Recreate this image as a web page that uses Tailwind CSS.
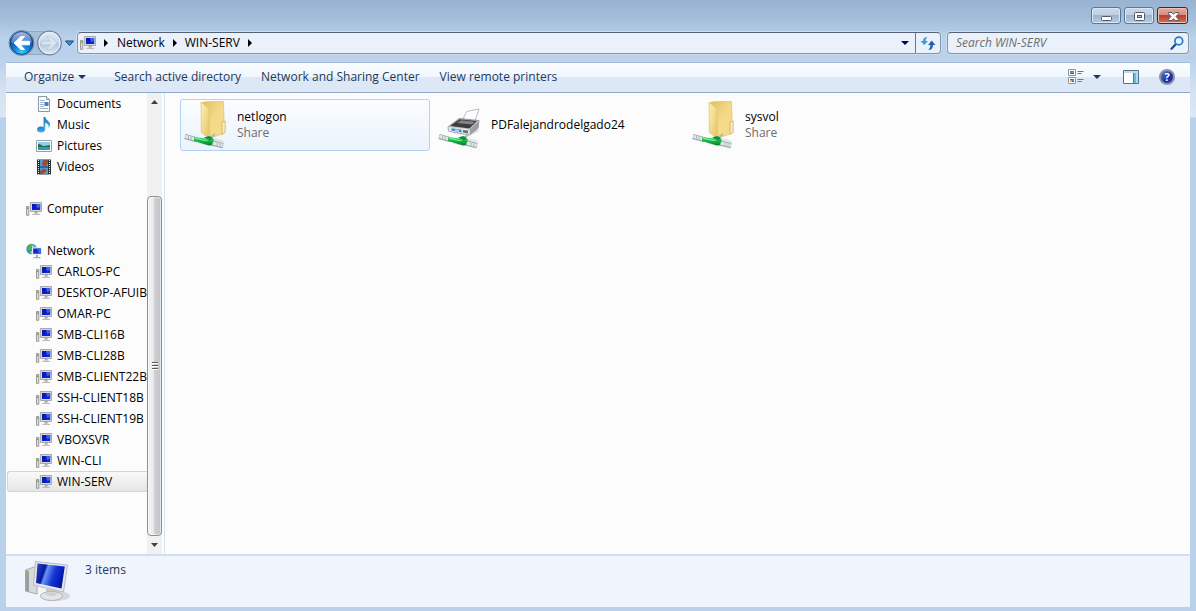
<!DOCTYPE html>
<html lang="en">
<head>
<meta charset="utf-8">
<title>WIN-SERV</title>
<meta name="viewport" content="width=device-width, initial-scale=1">
<script src="https://cdn.jsdelivr.net/npm/@tailwindcss/browser@4"></script>
</head>
<body class="h-screen overflow-hidden bg-[#b9d1ea] font-['Open_Sans','Noto_Sans',sans-serif] text-xs text-black">
<svg class="absolute size-0" aria-hidden="true">
  <defs>
    <linearGradient id="screen" x1="0" y1="0" x2="1" y2="1"><stop offset="0" stop-color="#0a14a8"/><stop offset=".5" stop-color="#0a1cc4"/><stop offset="1" stop-color="#1030d0"/></linearGradient>
    <linearGradient id="bigscreen" x1="0" y1="0" x2="1" y2=".3"><stop offset="0" stop-color="#2c50c8"/><stop offset=".34" stop-color="#0618a0"/><stop offset=".42" stop-color="#6a94f4"/><stop offset=".7" stop-color="#1434d4"/><stop offset="1" stop-color="#0418a8"/></linearGradient>
    <linearGradient id="folderL" x1="0" y1="0" x2="1" y2="1"><stop offset="0" stop-color="#fdf1b8"/><stop offset="1" stop-color="#e6c35c"/></linearGradient>
    <linearGradient id="folderR" x1="0" y1="0" x2="1" y2="1"><stop offset="0" stop-color="#e3bf5c"/><stop offset=".5" stop-color="#f3d98a"/><stop offset="1" stop-color="#f7dc84"/></linearGradient>
    <linearGradient id="green" x1="0" y1="0" x2="0" y2="1"><stop offset="0" stop-color="#3fd86c"/><stop offset=".5" stop-color="#16b046"/><stop offset="1" stop-color="#067a28"/></linearGradient>
    <radialGradient id="orb" cx=".5" cy=".95" r=".8"><stop offset="0" stop-color="#38d8ff"/><stop offset=".4" stop-color="#1488e0"/><stop offset="1" stop-color="#0a3f9c"/></radialGradient>
    <linearGradient id="orbshine" x1="0" y1="0" x2="0" y2="1"><stop offset="0" stop-color="#d4e4f8"/><stop offset="1" stop-color="#4f84cc"/></linearGradient>
    <linearGradient id="glass" x1="0" y1="0" x2="0" y2="1"><stop offset="0" stop-color="#e2ebf5"/><stop offset=".5" stop-color="#c8d6e6"/><stop offset=".52" stop-color="#b4c8de"/><stop offset="1" stop-color="#dbe8f5"/></linearGradient>
    <linearGradient id="note" x1="0" y1="0" x2="0" y2="1"><stop offset="0" stop-color="#2578c4"/><stop offset="1" stop-color="#48b4ee"/></linearGradient>
    <symbol id="pc" viewBox="0 0 16 16">
      <path d="M.5 5.5h2.3v8.8H.5z" fill="#dcdcdc" stroke="#9a9a9a"/><path d="M1 6.5h1.500v1.500H1z" fill="#48b83c"/>
      <path d="M4.400 1.500h11.100v9H4.400z" fill="#d6d6d6" stroke="#a8a8a8"/><path d="M6 3h8.200v6H6z" fill="url(#screen)"/><path d="M10 3h4.200v3L11 7z" fill="#3a62e8"/>
      <path d="M8.600 11h3v1.600h-3z" fill="#a6a6a6"/><path d="M6.600 12.700h7l.8 1.400H6z" fill="#bdbdbd"/>
    </symbol>
    <symbol id="net" viewBox="0 0 16 16">
      <circle cx="5.600" cy="6" r="5.300" fill="#2489cc"/><path d="M1 4.500 4 1.200 7.200 1 5 4 5.600 6.200 3.200 7.500 1 7z" fill="#58b348"/><path d="M7.500 1.200 10 2.800 8.800 3.800z" fill="#6bd0ea"/><path d="M3 9l3-1v3z" fill="#8cd858"/><path d="M5.500 2.200 8 3 6.300 4.800z" fill="#c9f0fa"/>
      <path d="M6.400 4.800h9.100v6.700H6.400z" fill="#c8d4de" stroke="#e8f0f4"/><path d="M7.200 5.500h7.600v5.200H7.200z" fill="#1228c8"/><path d="M11 5.500h3.800v5.200h-2z" fill="#3c68e8"/><path d="M10 12h2v2h2.500v1.300h-7V14H10z" fill="#9eb0c0"/>
    </symbol>
    <symbol id="cable" viewBox="0 0 48 48">
      <ellipse cx="30" cy="41" rx="13" ry="3.400" fill="#c9cfd0" opacity=".5"/>
      <path d="M27 37l4-1.500 3-2.500" fill="none" stroke="#b3b9bb" stroke-width="2"/>
      <path d="M4 35.500 16 38.900" stroke="#8f9da2" stroke-width="5"/><path d="M4.300 35.300 16 38.700" stroke="#dfe7e8" stroke-width="3.400"/><path d="M7.500 34.500v4M10 35v4.500" stroke="#aebabd"/>
      <path d="M30 41.800 42 44.800" stroke="#8f9da2" stroke-width="5"/><path d="M30 41.600 41.700 44.500" stroke="#dfe7e8" stroke-width="3.400"/><path d="M36 41.500v4M39 42v4" stroke="#aebabd"/>
      <path d="M13 36 24 37.500 29 36.200 33 38.300 31 44 28 44.500 13 40z" fill="url(#green)"/><path d="M14 37.200 24 39.500 30 38" fill="none" stroke="#7ef09c" stroke-width="1.200"/><path d="M23 36.500 28 35l4 2-3 2.500z" fill="#0c9438"/>
    </symbol>
    <symbol id="share" viewBox="0 0 48 48">
      <path d="M20 2 24.500 .7 42.500 .5 43.500 32 30 37z" fill="url(#folderR)" stroke="#dcbb62" stroke-width=".6"/>
      <path d="M41 21l3.200-.8v11L41 33.500z" fill="#f8ecbc" stroke="#c9aa58" stroke-width=".7"/>
      <path d="M20 1.200 28.300 7.800V37.500L20.300 31.500z" fill="url(#folderL)" stroke="#e0c46e" stroke-width=".7"/>
      <use href="#cable"/>
    </symbol>
    <symbol id="printer" viewBox="0 0 48 48">
      <ellipse cx="29" cy="29" rx="15" ry="5" fill="#ccc" opacity=".5"/>
      <path d="M28 18 31.500 10.500 44 8 40 20z" fill="#fdfdfd" stroke="#b6b6b6" stroke-width=".9"/>
      <path d="M13 26 24 17.500 44 19.500 43 27 35 34 13.500 30z" fill="#c8c8c8" stroke="#888" stroke-width=".8"/>
      <path d="M15 25 24.500 18.300 42 20 34.500 27.500z" fill="#3b3d40"/><path d="M22 22 26 19.300 40 20.800 37 23.600z" fill="#808488"/>
      <path d="M13.500 26 34.500 28.600 35 33.700 13.800 30z" fill="#e4e6e8"/><path d="M16.500 27.200l10 1.500v2.800l-10-1.900z" fill="#3d86e0"/><path d="M20 28.300l4 .6v1.800l-4-.7z" fill="#b9dcfa"/><path d="M28 29l5 .6v2.800l-5-.9z" fill="#6a6f74"/><path d="M34.800 28.500 43.300 20.500v6.500L35 33.800z" fill="#9b9ea0"/>
      <use href="#cable"/>
    </symbol>
  </defs>
</svg>

<div class="flex h-full flex-col bg-[linear-gradient(to_bottom,#98b3d1_0px,#a3bddb_18px,#b9d1ea_38px,#b9d1ea_58px,#d3e1f1_90px,#dce8f5_117px,#b9d1ea_118px)] px-1.5 pb-1">
  <header class="flex h-[30px] shrink-0 items-start justify-end gap-[3px] pt-[7px]">
    <button aria-label="Minimize" class="flex h-[17px] w-[30px] items-center justify-center rounded-[3px] border border-[#5b7696] bg-[linear-gradient(#c9d9ea_0%,#bfd0e5_48%,#9bb5d1_50%,#b5cbe2_100%)] shadow-[inset_0_0_0_1px_#dbe7f3]">
      <svg class="h-4 w-7" viewBox="0 0 28 16"><rect x="9.500" y="8.500" width="10" height="4" rx="1" fill="#fff" stroke="#535a68"/></svg>
    </button>
    <button aria-label="Maximize" class="flex h-[17px] w-[30px] items-center justify-center rounded-[3px] border border-[#5b7696] bg-[linear-gradient(#c9d9ea_0%,#bfd0e5_48%,#9bb5d1_50%,#b5cbe2_100%)] shadow-[inset_0_0_0_1px_#dbe7f3]">
      <svg class="h-4 w-7" viewBox="0 0 28 16"><rect x="9.500" y="4.500" width="10" height="8" rx="1" fill="#fff" stroke="#535a68"/><rect x="12.500" y="7.500" width="4" height="2" fill="#a8bfd9" stroke="#535a68"/></svg>
    </button>
    <button aria-label="Close" class="mr-0.5 flex h-[17px] w-[31px] items-center justify-center rounded-[3px] border border-[#5c1a22] bg-[linear-gradient(#e9a99d_0%,#d98a7b_48%,#b8412a_50%,#d0705c_100%)] shadow-[inset_0_0_0_1px_#efc0b6]">
      <svg class="h-4 w-7" viewBox="0 0 28 16"><path d="M9.500 4.500h3.300L14.500 6.300l1.700-1.800h3.300v1.300L17 8.500l2.500 2.700v1.300h-3.300l-1.700-1.800-1.700 1.800H9.500v-1.300L12 8.500 9.500 5.800z" fill="#fff" stroke="#535a68"/></svg>
    </button>
  </header>

  <div class="flex h-8 shrink-0 items-start">
    <nav aria-label="History" class="flex h-[26px] w-[71px] shrink-0 items-center">
      <svg class="h-7 w-[71px]" viewBox="0 0 71 28">
        <path d="M15 2.500h28a11 11 0 0 1 0 23H15z" fill="#a9c0da" stroke="#8fa9c6"/>
        <circle cx="15.500" cy="14" r="12.500" fill="#8ea6c4" stroke="#6f8aad"/>
        <circle cx="15.500" cy="14" r="11.300" fill="url(#orb)" stroke="#123c7c"/>
        <path d="M5 13.500a10.500 10.500 0 0 1 21 0q-10.500 3-21 0z" fill="url(#orbshine)" opacity=".75"/>
        <path d="M8 14 15 7.500h3.500L14.500 12.300H23.500v3.500H14.500L18.500 20.500H15z" fill="#fff" stroke="#fff" stroke-linejoin="round"/>
        <circle cx="43.500" cy="14" r="11.800" fill="url(#glass)" stroke="#7288a6" stroke-width="1.300"/><circle cx="43.500" cy="14" r="10.500" fill="none" stroke="#eef4fa"/>
        <path d="M51 14 44 7.500h-3.500L44.500 12.300H35.500v3.500H44.500L40.500 20.500H44z" fill="#d9e5f1" stroke="#b2c4d8" stroke-width=".6"/>
        <path d="M59.500 12h8L63.500 16.500z" fill="#2b9cd0" stroke="#17477c"/>
      </svg>
    </nav>
    <div class="mt-[2px] flex h-[22px] min-w-0 flex-1 items-center rounded-sm border border-[#8195ad] border-t-[#536275] bg-[#eaf1fa] shadow-[0_0_0_1px_#cfdeee]">
      <svg class="ml-0.5 size-4 shrink-0"><use href="#pc"/></svg>
      <svg class="ml-2 h-2 w-1 shrink-0" viewBox="0 0 4 8"><path d="M0 0v8l4-4z"/></svg>
      <button class="ml-[9px]">Network</button>
      <svg class="ml-2 h-2 w-1 shrink-0" viewBox="0 0 4 8"><path d="M0 0v8l4-4z"/></svg>
      <button class="ml-2">WIN-SERV</button>
      <svg class="ml-2 h-2 w-1 shrink-0" viewBox="0 0 4 8"><path d="M0 0v8l4-4z"/></svg>
      <button aria-label="Previous locations" class="ml-auto flex h-full w-5 items-center justify-center"><svg class="h-1 w-2" viewBox="0 0 8 4"><path d="M0 0h8L4 4z" fill="#00005c"/></svg></button>
      <button aria-label="Refresh" class="flex h-full w-[25px] items-center justify-center border-l border-[#69788c]">
        <svg class="size-4" viewBox="0 0 16 16"><path d="M7.500 2C4.500 2 3 3.500 3 6H.5L4.300 10 8 6H5.700C5.700 4.200 6.200 3 7.500 2z" fill="#3b9bd6"/><path d="M8.500 15c3 0 4.500-2 4.500-5h2.500L11.700 5.500 8 10h2.300c0 2-.5 3.500-1.800 5z" fill="#2563ae"/></svg>
      </button>
    </div>
    <label class="mt-[2px] mr-px ml-1.5 flex h-[22px] w-[242px] items-center rounded-sm border border-[#8195ad] border-t-[#536275] bg-[#eaf1fa] pr-1 pl-2 shadow-[0_0_0_1px_#cfdeee]">
      <input type="text" aria-label="Search WIN-SERV" placeholder="Search WIN-SERV" class="min-w-0 flex-1 bg-transparent italic outline-none placeholder:text-[#6f6f6f]">
      <svg class="size-3.5" viewBox="0 0 14 14"><path d="M6 8 1.500 12.700" stroke="#1c4c94" stroke-width="2.300" stroke-linecap="round"/><circle cx="8.800" cy="5" r="3.900" fill="#e4f4fd" stroke="#2878c4" stroke-width="1.700"/></svg>
    </label>
  </div>

  <div class="flex h-[31px] shrink-0 items-center border-t border-b border-t-[#a3b9d4] border-b-[#93a8c9] bg-[linear-gradient(#fafdff_0%,#eff6fd_48%,#dde8f6_50%,#dde8f6_100%)] pr-[15px] pb-0.5 pl-[18px] text-[#1e395b]">
    <button class="flex items-center gap-1">Organize <svg class="h-1 w-2" viewBox="0 0 8 4"><path d="M0 0h8L4 4z" fill="#1e395b"/></svg></button>
    <button class="ml-7">Search active directory</button>
    <button class="ml-5">Network and Sharing Center</button>
    <button class="ml-5">View remote printers</button>
    <button aria-label="Change your view" class="ml-auto flex items-center gap-[9px]">
      <svg class="size-4" viewBox="0 0 16 16"><path d="M.5.5h7v6h-7zM.5 8.500h7v6h-7z" fill="#fff" stroke="#8797ab"/><path d="M2 2h4v1.500H2z" fill="#3f86cc"/><path d="M2 3.500h4V5H2z" fill="#2d7c4c"/><path d="M2 10h2v1.500H2z" fill="#d83a2a"/><path d="M4 10h2v1.500H4z" fill="#36a040"/><path d="M2 11.500h2V13H2z" fill="#f0b820"/><path d="M4 11.500h2V13H4z" fill="#2857c0"/><path d="M9.500 2.500h6M9.500 4.500h4M9.500 10.500h6M9.500 12.500h4" stroke="#69798c"/></svg>
      <svg class="h-1 w-2" viewBox="0 0 8 4"><path d="M0 0h8L4 4z" fill="#1e395b"/></svg>
    </button>
    <button aria-label="Show the preview pane" class="ml-[22px]"><svg class="h-3.5 w-4" viewBox="0 0 16 14"><path d="M.5.500h15v13H.5z" fill="#fff" stroke="#56718f"/><path d="M1 1h14v2H1z" fill="#c9d8e8"/><path d="M10 3h5v10h-5z" fill="#63bfdf"/><path d="M10.500 3v10" stroke="#3d7fa6"/><path d="M13 3h2v10h-2z" fill="#a5e0f2"/></svg></button>
    <button aria-label="Get help" class="ml-5 flex size-4 items-center justify-center rounded-full border-2 border-[#8d93a4] bg-[linear-gradient(135deg,#5a84e0,#1a2f9c_60%,#1c3ab0)] text-[11px] leading-none font-bold text-white">?</button>
  </div>

  <main class="flex min-h-0 flex-1 bg-[#fcfcfc]">
    <aside class="flex w-[159px] shrink-0 border-r border-[#d6e5f5]">
      <ul class="min-w-0 flex-1 overflow-hidden whitespace-nowrap">
        <li><a href="#" class="flex h-[21px] items-center gap-[5px] pl-[30px]"><svg class="size-4 shrink-0" viewBox="0 0 16 16"><path d="M2.500.500h8l3 3v12h-11z" fill="#fdfefe" stroke="#8a98a6"/><path d="M10.500.500v3h3" fill="#dbe4ec" stroke="#8a98a6"/><path d="M4 4.500h5M4 6.500h4M4 8.500h4M4 10.500h4M4 12.500h8" stroke="#9db2c8"/><path d="M8.500 6h4v4h-4z" fill="#3c7fca"/></svg>Documents</a></li>
        <li><a href="#" class="flex h-[21px] items-center gap-[5px] pl-[30px]"><svg class="size-4 shrink-0" viewBox="0 0 16 16"><ellipse cx="5" cy="12.500" rx="4" ry="3" fill="url(#note)"/><path d="M7.500 0h1.800c.3 3 4.700 4 4.700 7.500 0 1.500-.8 2.700-1.500 3.300.7-3-1-4.300-3.200-4.800v6.500H7.500z" fill="url(#note)"/></svg>Music</a></li>
        <li><a href="#" class="flex h-[21px] items-center gap-[5px] pl-[30px]"><svg class="size-4 shrink-0" viewBox="0 0 16 16"><path d="M.5 2.500h15v11H.5z" fill="#fff" stroke="#96a0aa"/><path d="M2 4h12v4H2z" fill="#8fcdf2"/><path d="M2 6c3 0 4 2 6 2s4-1 6-1v2H2z" fill="#276d48"/><path d="M2 9h12v3H2z" fill="#2c9cbe"/></svg>Pictures</a></li>
        <li><a href="#" class="flex h-[21px] items-center gap-[5px] pl-[30px]"><svg class="size-4 shrink-0" viewBox="0 0 16 16"><path d="M1 .5h14v15H1z" fill="#283038"/><path d="M4 1h8v6.500H4zM4 8.500h8V15H4z" fill="#4c9ed4"/><path d="M7 1h5v3L9.500 7.500 6 6zM4 12l4-2.500 3 2L7 15H4z" fill="#9b4b3c"/><path d="M2.500 1v15M13.500 1v15" stroke="#e8eef0" stroke-dasharray="1 1"/></svg>Videos</a></li>
        <li class="mt-[21px]"><a href="#" class="flex h-[21px] items-center gap-[5px] pl-5"><svg class="size-4 shrink-0"><use href="#pc"/></svg>Computer</a></li>
        <li class="mt-[21px]"><a href="#" class="flex h-[21px] items-center gap-[5px] pl-5"><svg class="size-4 shrink-0"><use href="#net"/></svg>Network</a></li>
        <li><a href="#" class="flex h-[21px] items-center gap-[5px] pl-[30px]"><svg class="size-4 shrink-0"><use href="#pc"/></svg>CARLOS-PC</a></li>
        <li><a href="#" class="flex h-[21px] items-center gap-[5px] pl-[30px]"><svg class="size-4 shrink-0"><use href="#pc"/></svg>DESKTOP-AFUIBU</a></li>
        <li><a href="#" class="flex h-[21px] items-center gap-[5px] pl-[30px]"><svg class="size-4 shrink-0"><use href="#pc"/></svg>OMAR-PC</a></li>
        <li><a href="#" class="flex h-[21px] items-center gap-[5px] pl-[30px]"><svg class="size-4 shrink-0"><use href="#pc"/></svg>SMB-CLI16B</a></li>
        <li><a href="#" class="flex h-[21px] items-center gap-[5px] pl-[30px]"><svg class="size-4 shrink-0"><use href="#pc"/></svg>SMB-CLI28B</a></li>
        <li><a href="#" class="flex h-[21px] items-center gap-[5px] pl-[30px]"><svg class="size-4 shrink-0"><use href="#pc"/></svg>SMB-CLIENT22B</a></li>
        <li><a href="#" class="flex h-[21px] items-center gap-[5px] pl-[30px]"><svg class="size-4 shrink-0"><use href="#pc"/></svg>SSH-CLIENT18B</a></li>
        <li><a href="#" class="flex h-[21px] items-center gap-[5px] pl-[30px]"><svg class="size-4 shrink-0"><use href="#pc"/></svg>SSH-CLIENT19B</a></li>
        <li><a href="#" class="flex h-[21px] items-center gap-[5px] pl-[30px]"><svg class="size-4 shrink-0"><use href="#pc"/></svg>VBOXSVR</a></li>
        <li><a href="#" class="flex h-[21px] items-center gap-[5px] pl-[30px]"><svg class="size-4 shrink-0"><use href="#pc"/></svg>WIN-CLI</a></li>
        <li><a href="#" aria-current="true" class="ml-px flex h-[21px] items-center gap-[5px] rounded-l-[3px] border border-r-0 border-[#d4d4d4] bg-linear-to-b from-[#f9f9f9] to-[#e6e6e6] pl-7"><svg class="size-4 shrink-0"><use href="#pc"/></svg>WIN-SERV</a></li>
      </ul>
      <div class="mr-0.5 flex w-[15px] shrink-0 flex-col items-center bg-[#f1f1f1]">
        <button aria-label="Scroll up" class="flex h-[17px] w-full items-center justify-center"><svg class="h-1 w-[7px]" viewBox="0 0 7 4"><path d="M0 4h7L3.500 0z" fill="#404040"/></svg></button>
        <div class="min-h-0 w-full flex-[86]"></div>
        <div class="flex min-h-0 w-full flex-[340] items-center justify-center rounded-sm border border-[#8e8f92] bg-[linear-gradient(to_right,#f5f5f5_0%,#e8e8ea_45%,#cfcfd3_50%,#c2c2c7_100%)] shadow-[inset_0_0_0_1px_#ffffff90]">
          <svg class="size-2" viewBox="0 0 8 8"><path d="M1 .5h6M1 3.500h6M1 6.500h6" stroke="#5a5a5a"/><path d="M1 1.500h6M1 4.500h6M1 7.500h6" stroke="#fff"/></svg>
        </div>
        <button aria-label="Scroll down" class="flex h-[18px] w-full items-center justify-center"><svg class="h-1 w-[7px]" viewBox="0 0 7 4"><path d="M0 0h7L3.500 4z" fill="#404040"/></svg></button>
      </div>
    </aside>
    <ul class="flex flex-1 flex-wrap content-start gap-x-1 pt-1.5 pl-[15px]">
      <li><a href="#" class="flex h-[52px] w-[250px] items-center gap-2 rounded-[3px] border border-[#b4d3f4] bg-linear-to-b from-[#fbfdff] to-[#ebf3fd]"><svg class="size-12 shrink-0"><use href="#share"/></svg><span class="leading-4">netlogon<br><span class="text-[#6d6d6d]">Share</span></span></a></li>
      <li><a href="#" class="flex h-[52px] w-[250px] items-center gap-2 border border-transparent"><svg class="size-12 shrink-0"><use href="#printer"/></svg><span class="leading-4">PDFalejandrodelgado24</span></a></li>
      <li><a href="#" class="flex h-[52px] w-[250px] items-center gap-2 border border-transparent"><svg class="size-12 shrink-0"><use href="#share"/></svg><span class="leading-4">sysvol<br><span class="text-[#6d6d6d]">Share</span></span></a></li>
    </ul>
  </main>

  <footer class="flex h-[53px] shrink-0 items-start border-t-2 border-[#d0deed] bg-[#f0f4fc] pl-4 text-[#1e395b]">
    <svg class="mt-0.5 h-12 w-[50px]" viewBox="0 0 50 48">
      <ellipse cx="34" cy="38" rx="14" ry="5" fill="#b9bcc4" opacity=".5"/>
      <path d="M3.500 12 15 8v28L3.500 33z" fill="#d7d9db" stroke="#aaadb0"/><path d="M3.500 12 7 13v21l-3.500-1z" fill="#9c9fa2"/><path d="M4.500 14.500l1.800.4v2.800l-1.800-.4z" fill="#5cd83c"/>
      <path d="M24 31h10v7H24z" fill="#c8cacc"/><ellipse cx="29.500" cy="38" rx="11" ry="4.500" fill="#e4e5e6" stroke="#b0b2b5"/><ellipse cx="29.500" cy="36" rx="6" ry="2" fill="#cfd1d3"/>
      <path d="M13.500 3.500 45.500 7 41.500 34 11.500 27z" fill="#e6e7e8" stroke="#b8babc"/>
      <path d="M15.500 5.500 42.800 8.500 39.500 30.500 14 25z" fill="url(#bigscreen)"/>
    </svg>
    <p class="mt-1.5 ml-[13px]">3 items</p>
  </footer>
</div>
</body>
</html>
